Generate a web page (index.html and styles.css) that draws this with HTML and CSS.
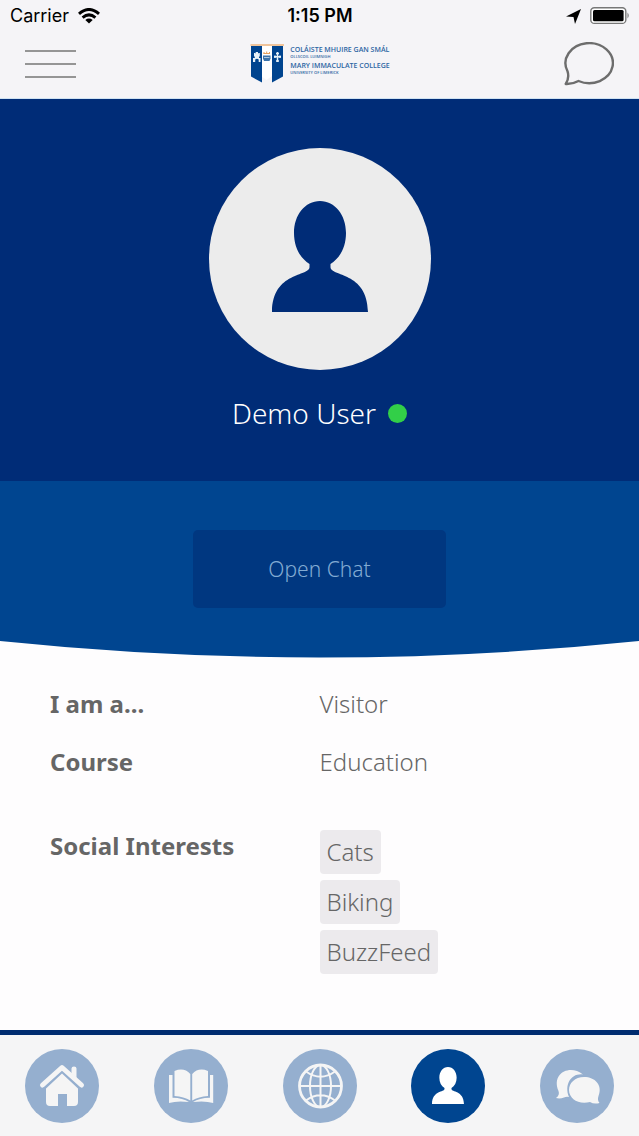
FILE: index.html
```html
<!DOCTYPE html>
<html lang="en">
<head>
<meta charset="utf-8">
<meta name="viewport" content="width=device-width, initial-scale=1">
<title>Demo User</title>
<link rel="stylesheet" href="styles.css">
</head>
<body class="app">
<header class="top">
  <div class="status">
    <div class="status-side">
      <span class="carrier">Carrier</span>
      <svg class="wifi" viewBox="0 0 22 16" aria-hidden="true"><g fill="none" stroke="#000" stroke-width="3"><path d="M1 5.800Q11-2.800 21 5.800"/><path d="M4.600 9.600Q11 4.200 17.400 9.600"/></g><path d="M11 15.500 7.300 12Q11 9.200 14.700 12Z"/></svg>
    </div>
    <span class="clock">1:15 PM</span>
    <div class="status-side status-end">
      <svg class="locate" viewBox="0 0 15 15" aria-hidden="true"><path d="M15 0 9 15 7.500 8 0 7.500Z"/></svg>
      <svg class="battery" viewBox="0 0 40 18" aria-hidden="true"><rect x=".8" y=".8" width="35" height="15.600" rx="3.500" fill="#fff" stroke="#777" stroke-width="1.400"/><rect x="3" y="3" width="30.600" height="11.200" rx="1.500"/><path d="M37.500 5.500Q40 8.500 37.500 11.500Z" fill="#777"/></svg>
    </div>
  </div>
  <div class="bar">
    <button class="icon-button" type="button" aria-label="Menu"><svg class="menu" viewBox="0 0 51 30"><path d="M0 2H51M0 15H51M0 28H51" stroke="#757575" stroke-width="1.500"/></svg></button>
    <a class="brand" href="#home">
      <svg class="crest" viewBox="0 0 34 40" aria-hidden="true">
        <path fill="#fff" d="M11 2H22V32L16.500 36 11 32Z"/>
        <path fill="#00448f" d="M1 2H12V38.500L1 32.500ZM22 2H33V32.500L22 38.500Z"/>
        <path d="M.5 1H34" stroke="#eeb47c" stroke-width="1.400"/>
        <path fill="#e8f2f8" d="M4 9H5.500V10H5.700V8H8V10H8.200V9H9.800V12.500H9V14H10.500V18H8.700V15.500Q7 14 5.200 15.500V18H3V14H4.800V12.500H4Z"/>
        <path d="M27.500 8V18M24 12.800H31M26 9.500H29M26 17H29M25 11.500V14M30 11.500V14" stroke="#e8f2f8" stroke-width="1.500"/>
        <path d="M13.500 9.500H20M14 8V10M16.700 7.500V10M19.500 8V10" stroke="#e5a05e" stroke-width="1"/>
        <path fill="#3c73aa" d="M13 11.500H20.500V14.500L19.500 17H14L13 14.500Z"/><path d="M14 13.500H19.500" stroke="#dce9f3" stroke-width=".7"/>
      </svg>
      <span class="brand-text"><strong class="brand-name">COLÁISTE MHUIRE GAN SMÁL</strong><span class="brand-sub">OLLSCOIL LUIMNIGH</span><strong class="brand-name brand-second">MARY IMMACULATE COLLEGE</strong><span class="brand-sub">UNIVERSITY OF LIMERICK</span></span>
    </a>
    <button class="icon-button" type="button" aria-label="Messages"><svg class="bubble" viewBox="0 0 50 44"><path d="M3.500 29.200A23.700 20 0 1 1 14.500 39C10 41.500 6 42.200 1.700 42C4 38.500 5 34 3.500 29.200Z" fill="none" stroke="#6d6d6d" stroke-width="2.400" stroke-linejoin="round"/></svg></button>
  </div>
</header>
<main class="profile">
  <section class="hero">
    <div class="avatar"><svg class="person" viewBox="0 0 96 111" role="img" aria-label="Profile picture"><use href="#person-shape"/></svg></div>
    <h1 class="name">Demo User<span class="online" role="img" aria-label="Online"></span></h1>
  </section>
  <section class="action">
    <button class="chat" type="button">Open Chat</button>
  </section>
  <svg class="curve" viewBox="0 0 639 17" preserveAspectRatio="none" aria-hidden="true"><path d="M0 0H639Q319.500 33 0 0Z" fill="#004590"/></svg>
  <dl class="details">
    <dt class="label">I am a...</dt><dd class="value">Visitor</dd>
    <dt class="label">Course</dt><dd class="value">Education</dd>
    <dt class="label label-tags">Social Interests</dt>
    <dd class="tags"><span class="tag">Cats</span><span class="tag">Biking</span><span class="tag">BuzzFeed</span></dd>
  </dl>
</main>
<nav class="tabs" aria-label="Main">
  <a class="tab" href="#home" aria-label="Home"><svg class="tab-icon" viewBox="0 0 74 74"><path d="M17.500 36 37 18.500 56.500 36" fill="none" stroke="#f5f5f5" stroke-width="5" stroke-linecap="round" stroke-linejoin="round"/><path fill="#f5f5f5" d="M46.500 19.500Q46.500 17.500 49 17.500T51.500 19.500V29L46.500 24.500ZM37 24.500 53 39.500V53Q53 57 49 57H42V45H33V57H25Q21 57 21 53V39.500Z"/></svg></a>
  <a class="tab" href="#library" aria-label="Library"><svg class="tab-icon" viewBox="0 0 74 74"><path fill="#f5f5f5" d="M20.500 22Q30 18 36.300 25V51.500Q30 47.500 20.500 47ZM54 22Q44.500 18 38.200 25V51.500Q44.500 47.500 54 47ZM15 26H18.500V48.800Q29 49 35 53Q23 51.500 15 54ZM59.200 26H56V48.800Q45 49 39 53Q51 51.500 59.200 54Z"/></svg></a>
  <a class="tab" href="#web" aria-label="Web"><svg class="tab-icon" viewBox="0 0 74 74"><g fill="none" stroke="#f5f5f5" stroke-width="2"><circle cx="37.500" cy="37" r="21" stroke-width="2.800"/><ellipse cx="37.500" cy="37" rx="10.500" ry="21"/><path d="M37.500 16V58M16.500 37H58.500M23 22.500Q37.500 33 52 22.500M23 51.500Q37.500 41 52 51.500"/></g></svg></a>
  <a class="tab tab-active" href="#profile" aria-label="Profile" aria-current="page"><svg class="tab-icon" viewBox="0 0 74 74"><g transform="translate(21 18) scale(.333)"><path id="person-shape" fill="currentColor" d="M48 0C63 0 74 14 74 32C74 46 68 57 58.500 63V66C58.500 76 95.500 70 96 111H0C.5 70 37.500 76 37.500 66V63C28 57 22 46 22 32C22 14 33 0 48 0Z"/></g></svg></a>
  <a class="tab" href="#chat" aria-label="Chat"><svg class="tab-icon" viewBox="0 0 74 74"><path fill="#f5f5f5" d="M43 25.500C31 24 24 36 29 48Q26 47.500 24 48.500Q20 50 16 49Q20 46 18.500 42C11 24 30 15 43 25.500Z"/><path fill="#f5f5f5" d="M44 28C35 28 29 34 29 41C29 50 39 56 50 53Q54 55.500 59.500 54Q57 51 58.500 47C63 36 55 28 44 28Z"/></svg></a>
</nav>
</body>
</html>
```
FILE: styles.css
```css
* { box-sizing: border-box; }
.app {
  margin: 0;
  min-height: 100vh;
  display: flex;
  flex-direction: column;
  background: #fefdfe;
  color: #666;
  font-family: "Noto Sans", sans-serif;
  font-size: 24px;
  line-height: 32px;
}
.top { background: #f5f4f7; border-bottom: 1px solid #cfe2f2; }
.status {
  display: grid;
  grid-template-columns: 1fr auto 1fr;
  align-items: center;
  height: 32px;
  padding: 0 9px 0 10px;
  color: #000;
  font-family: Inter, sans-serif;
  font-size: 18px;
}
.status-side { display: flex; align-items: center; gap: 9px; }
.status-end { justify-content: flex-end; }
.clock { font-weight: 600; }
.wifi { width: 22px; height: 16px; }
.locate { width: 15px; height: 15px; }
.battery { width: 40px; height: 18px; }
.bar {
  display: flex;
  align-items: center;
  justify-content: space-between;
  height: 66px;
  padding: 0 25px 2px;
}
.icon-button { display: flex; padding: 0; border: 0; background: none; cursor: pointer; }
.menu { width: 51px; height: 30px; }
.bubble { width: 50px; height: 44px; }
.brand { display: flex; gap: 6px; color: #2c65a3; text-decoration: none; }
.crest { width: 34px; height: 40px; }
.brand-text { display: flex; flex-direction: column; padding-top: 2px; font-family: "Open Sans", sans-serif; }
.brand-name { font-size: 7px; line-height: 8px; font-weight: 600; }
.brand-second { padding-top: 3px; }
.brand-sub { font-size: 4px; line-height: 5px; font-weight: 600; }
.profile { flex: 1; }
.hero {
  display: flex;
  flex-direction: column;
  align-items: center;
  gap: 27px;
  padding: 49px 25px 52px;
  background: #002c77;
}
.avatar {
  display: flex;
  align-items: center;
  justify-content: center;
  width: 222px;
  height: 222px;
  padding-bottom: 6px;
  border-radius: 50%;
  background: #ececec;
  color: #002c77;
}
.person { width: 96px; height: 111px; }
.name {
  display: flex;
  align-items: center;
  gap: 12px;
  margin: 0;
  color: #fff;
  font-size: 28px;
  font-weight: 350;
}
.online { width: 19px; height: 19px; border-radius: 50%; background: #32cf48; }
.action { display: flex; justify-content: center; padding: 49px 25px 33px; background: #004590; }
.chat {
  width: 253px;
  height: 78px;
  border: 0;
  border-radius: 5px;
  background: #003780;
  color: #82abd3;
  font: inherit;
  font-size: 21px;
  font-weight: 350;
}
.curve { display: block; width: 100%; height: 17px; }
.details {
  display: grid;
  grid-template-columns: 1fr 1fr;
  row-gap: 26px;
  margin: 0;
  padding: 30px 50px;
}
.label { font-weight: 700; }
.value, .tags { margin: 0; font-weight: 350; }
.label-tags { padding-top: 26px; }
.tags { display: flex; flex-direction: column; align-items: flex-start; gap: 6px; padding-top: 26px; }
.tag { padding: 6px 7px; border-radius: 4px; background: #eceaed; }
.tabs {
  display: flex;
  justify-content: space-between;
  padding: 14px 25px 13px;
  border-top: 5px solid #002c70;
  background: #f5f5f6;
}
.tab { display: flex; width: 74px; height: 74px; border-radius: 50%; background: #95afcf; color: #fff; }
.tab-active { background: #004590; }
.tab-icon { width: 74px; height: 74px; }
```
